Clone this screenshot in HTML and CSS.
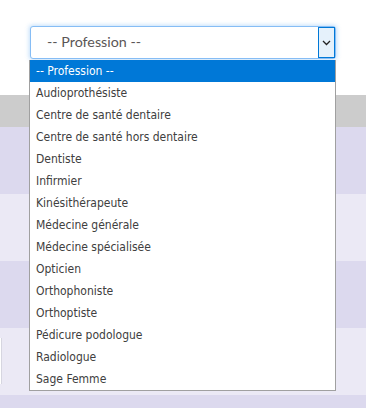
FILE: index.html
```html
<!DOCTYPE html>
<html lang="fr">
<head>
<meta charset="utf-8">
<title>Profession</title>
<link rel="stylesheet" href="styles.css">
</head>
<body>
<div class="top">
  <div class="select-wrap">
    <div class="select">
      <span class="select-label">-- Profession --</span>
      <span class="select-arrow">
        <svg width="9" height="6" viewBox="0 0 9 6"><path d="M1 1 L4.5 4.5 L8 1" fill="none" stroke="#222" stroke-width="1.3"/></svg>
      </span>
    </div>
    <ul class="listbox">
      <li class="opt selected">-- Profession --</li>
      <li class="opt">Audioprothésiste</li>
      <li class="opt">Centre de santé dentaire</li>
      <li class="opt">Centre de santé hors dentaire</li>
      <li class="opt">Dentiste</li>
      <li class="opt">Infirmier</li>
      <li class="opt">Kinésithérapeute</li>
      <li class="opt">Médecine générale</li>
      <li class="opt">Médecine spécialisée</li>
      <li class="opt">Opticien</li>
      <li class="opt">Orthophoniste</li>
      <li class="opt">Orthoptiste</li>
      <li class="opt">Pédicure podologue</li>
      <li class="opt">Radiologue</li>
      <li class="opt">Sage Femme</li>
    </ul>
  </div>
</div>
<div class="rows">
  <div class="row head"></div>
  <div class="row dark"></div>
  <div class="row light"></div>
  <div class="row dark"></div>
  <div class="row light with-box"><div class="edge-box"></div></div>
  <div class="row dark last"></div>
</div>
</body>
</html>
```
FILE: styles.css
```css
html, body {
  margin: 0;
  padding: 0;
  background: #ffffff;
}
body {
  width: 366px;
  height: 408px;
  overflow: hidden;
}
.top {
  height: 95px;
  box-sizing: border-box;
  padding-top: 26px;
  padding-left: 30px;
}
.select-wrap {
  position: relative;
  width: 306px;
}
.select {
  height: 33px;
  box-sizing: border-box;
  border: 1px solid #86bdf5;
  border-radius: 3px;
  box-shadow: 0 0 4px 1px rgba(80, 160, 240, 0.35);
  background: #fff;
  display: flex;
  align-items: center;
  justify-content: space-between;
}
.select-label {
  font-family: Lato, "Open Sans", sans-serif;
  font-size: 14.3px;
  color: #5a5656;
  padding-left: 16px;
  margin-top: -2px;
}
.select-arrow {
  width: 17px;
  height: 31px;
  box-sizing: border-box;
  border: 1px solid #0078d7;
  background: #e5f1fb;
  display: flex;
  align-items: center;
  justify-content: center;
}
.listbox {
  position: absolute;
  left: -1px;
  top: 34px;
  width: 307px;
  box-sizing: border-box;
  margin: 0;
  padding: 0;
  list-style: none;
  background: #fff;
  border: 1px solid #a0a0a0;
  border-top: none;
}
.opt {
  height: 22px;
  line-height: 22px;
  padding-left: 6px;
  font-family: "DejaVu Sans Condensed", "DejaVu Sans", sans-serif;
  font-stretch: condensed;
  font-size: 12px;
  color: #404040;
  white-space: nowrap;
}
.opt.selected {
  background: #0078d7;
  color: #fff;
}
.row {
  height: 67px;
}
.row.head {
  height: 32px;
  background: #cccccc;
}
.row.dark {
  background: #dcd9ee;
}
.row.light {
  background: #ebe9f5;
}
.row.last {
  height: 13px;
}
.with-box {
  padding-top: 10px;
  box-sizing: border-box;
}
.edge-box {
  width: 2px;
  height: 46px;
  box-sizing: border-box;
  background: #fff;
  border-right: 1px solid #d6d6e0;
}
```
